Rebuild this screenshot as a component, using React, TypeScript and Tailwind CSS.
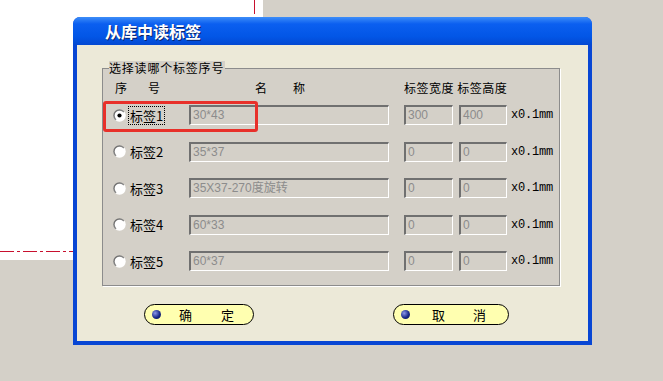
import { ReactNode } from "react";

const cjk = "font-['SimSun','Noto_Sans_CJK_SC',sans-serif]";

type Row = {
	label: string;
	name: string;
	width: string;
	height: string;
	checked?: boolean;
};

const rows: Row[] = [
	{ label: "标签1", name: "30*43", width: "300", height: "400", checked: true },
	{ label: "标签2", name: "35*37", width: "0", height: "0" },
	{ label: "标签3", name: "35X37-270度旋转", width: "0", height: "0" },
	{ label: "标签4", name: "60*33", width: "0", height: "0" },
	{ label: "标签5", name: "60*37", width: "0", height: "0" },
];

const Radio = ({ checked }: { checked?: boolean }) => (
	<svg width="13" height="13" viewBox="0 0 13 13" className="shrink-0">
		<defs>
			<linearGradient id="rim" x1="0" y1="0" x2="1" y2="1">
				<stop offset="0" stopColor="#606060" />
				<stop offset="0.5" stopColor="#8a8a8a" />
				<stop offset="0.56" stopColor="#ffffff" />
				<stop offset="1" stopColor="#ffffff" />
			</linearGradient>
		</defs>
		<circle cx="6.5" cy="6.5" r="6.2" fill="url(#rim)" />
		<circle cx="6.5" cy="6.5" r="4.8" fill="#ffffff" />
		{checked && <circle cx="6.5" cy="6.5" r="2.1" fill="#000000" />}
	</svg>
);

const Field = ({ children, className }: { children: ReactNode; className: string }) => (
	<div
		className={`h-[20px] shrink-0 border-t-2 border-l-2 border-b border-r border-t-[#707070] border-l-[#707070] border-b-white border-r-white bg-[#d4d0c8] pl-[2px] text-[12px] leading-[17px] text-[#8c8c8c] font-['Liberation_Sans','Noto_Sans_CJK_SC',sans-serif] ${className}`}
	>
		{children}
	</div>
);

const PillButton = ({ a, b, gapA, gapB, width }: { a: string; b: string; gapA: string; gapB: string; width: string }) => (
	<button
		className={`flex h-[21px] items-center rounded-full border border-black bg-[#ffffb0] pl-[7px] text-[13px] text-black ${cjk} ${width}`}
	>
		<span className="h-[9px] w-[9px] rounded-full bg-[radial-gradient(circle_at_35%_35%,#8a96e8,#1a2a8a_55%,#000a40)]" />
		<span className={gapA}>{a}</span>
		<span className={gapB}>{b}</span>
	</button>
);

export default function App() {
	return (
		<div className={`relative h-[381px] w-[663px] overflow-hidden bg-[#d4d0c8] ${cjk}`}>
			{/* document sheet behind the dialog */}
			<div className="absolute left-0 top-0 h-[260px] w-[263px] bg-white">
				<svg width="263" height="260" className="absolute inset-0">
					<line x1="0" y1="251.5" x2="100" y2="251.5" stroke="#c8102e" strokeWidth="1" strokeDasharray="14 3 3 3" />
					<line x1="254.5" y1="0" x2="254.5" y2="30" stroke="#c8102e" strokeWidth="1" strokeDasharray="14 3 3 3" />
				</svg>
			</div>

			{/* dialog window */}
			<div className="absolute left-[73px] top-[17px] flex h-[328px] w-[519px] flex-col rounded-t-[7px] bg-[#0846d4]">
				<div className="flex h-[28px] shrink-0 items-center rounded-t-[7px] bg-[linear-gradient(#3d8df8,#0b5ff0_25%,#0256e6_70%,#0348d2)] pl-[32px]">
					<span className="text-[16px] font-bold text-white [text-shadow:1px_1px_0_#0a246a]">从库中读标签</span>
				</div>

				<div className="mx-[4px] mb-[4px] flex flex-1 flex-col bg-[#ece9d8] pl-[25px] pt-[23px]">
					{/* group box */}
					<div className="relative h-[218px] w-[458px] border border-[#8c8c8c] bg-[#d4d0c8] shadow-[1px_1px_0_#ffffff]">
						<span className="absolute left-[6px] top-[-8px] bg-[#d4d0c8] pr-[1px] text-[12px] leading-[14px] tracking-[0.8px] text-black">
							选择读哪个标签序号
						</span>

						{/* header */}
						<div className="mt-[11px] flex h-[16px] items-center text-[12px] text-black">
							<span className="ml-[12px]">序</span>
							<span className="ml-[21px]">号</span>
							<span className="ml-[95px]">名</span>
							<span className="ml-[26px]">称</span>
							<span className="ml-[99px] tracking-[0.5px]">标签宽度 标签高度</span>
						</div>

						{/* rows */}
						<div className="mt-[9px] flex flex-col gap-[16.5px]">
							{rows.map((r) => (
								<div key={r.label} className="flex h-[20px] items-center">
									<div className="ml-[10px] flex w-[76px] items-center gap-[3px]">
										<Radio checked={r.checked} />
										<span
											className={`px-[1px] text-[13px] leading-[17px] text-black ${r.checked ? "outline outline-1 outline-dotted outline-black" : ""}`}
										>
											{r.label}
										</span>
									</div>
									<Field className="w-[200px]">{r.name}</Field>
									<Field className="ml-[15px] w-[49px]">{r.width}</Field>
									<Field className="ml-[6px] w-[48px]">{r.height}</Field>
									<span className="ml-[4px] font-['Liberation_Mono',monospace] text-[12px] tracking-[-0.2px] text-black">x0.1mm</span>
								</div>
							))}
						</div>

						{/* red highlight annotation */}
						<div className="pointer-events-none absolute left-[0px] top-[32px] h-[31px] w-[155px] rounded-[3px] border-[3px] border-[#e8302a]" />
					</div>

					{/* buttons */}
					<div className="mt-[18px] flex">
						<div className="ml-[42px]">
							<PillButton a="确" b="定" gapA="ml-[18px]" gapB="ml-[29px]" width="w-[110px]" />
						</div>
						<div className="ml-[139px]">
							<PillButton a="取" b="消" gapA="ml-[22px]" gapB="ml-[28px]" width="w-[116px]" />
						</div>
					</div>
				</div>
			</div>
		</div>
	);
}
